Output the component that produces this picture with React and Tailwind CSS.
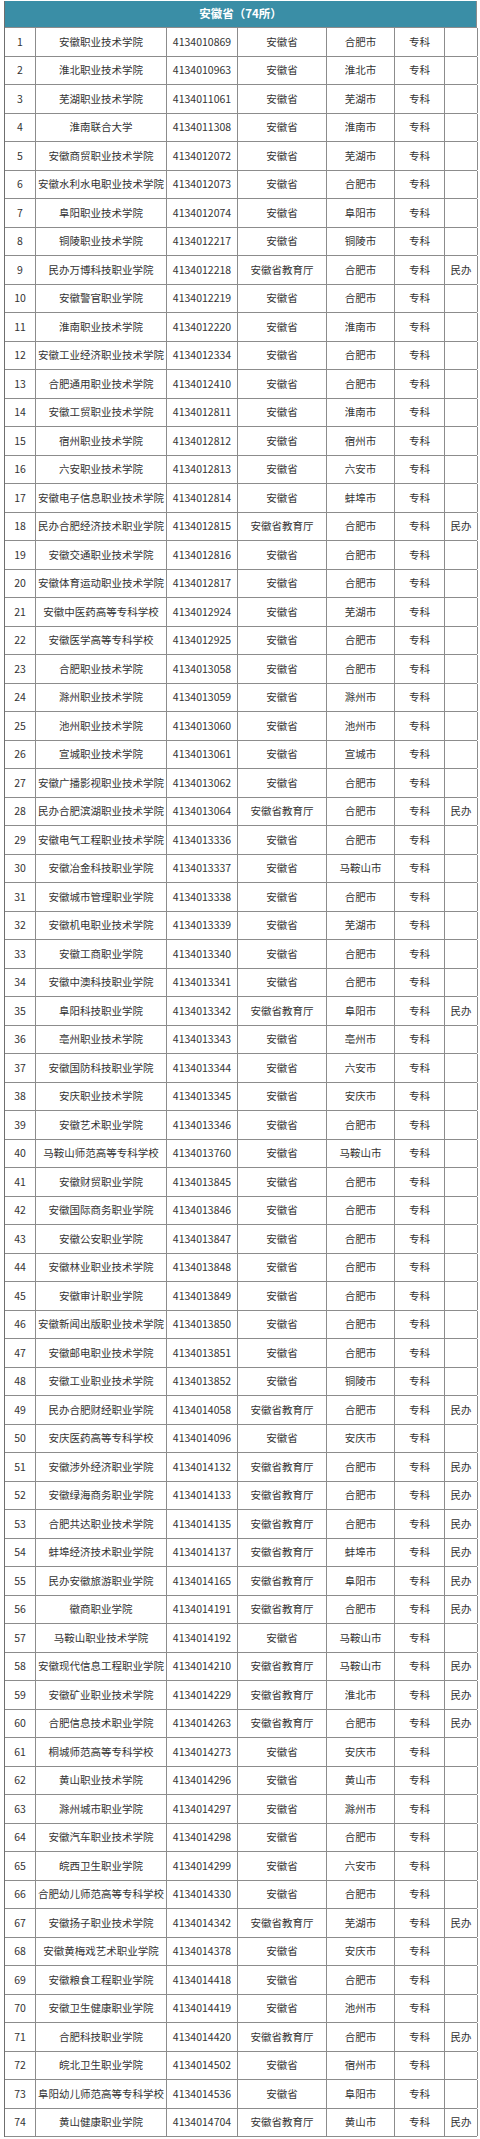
const rows = [
  ['安徽职业技术学院', '4134010869', '安徽省', '合肥市', '专科', ''],
  ['淮北职业技术学院', '4134010963', '安徽省', '淮北市', '专科', ''],
  ['芜湖职业技术学院', '4134011061', '安徽省', '芜湖市', '专科', ''],
  ['淮南联合大学', '4134011308', '安徽省', '淮南市', '专科', ''],
  ['安徽商贸职业技术学院', '4134012072', '安徽省', '芜湖市', '专科', ''],
  ['安徽水利水电职业技术学院', '4134012073', '安徽省', '合肥市', '专科', ''],
  ['阜阳职业技术学院', '4134012074', '安徽省', '阜阳市', '专科', ''],
  ['铜陵职业技术学院', '4134012217', '安徽省', '铜陵市', '专科', ''],
  ['民办万博科技职业学院', '4134012218', '安徽省教育厅', '合肥市', '专科', '民办'],
  ['安徽警官职业学院', '4134012219', '安徽省', '合肥市', '专科', ''],
  ['淮南职业技术学院', '4134012220', '安徽省', '淮南市', '专科', ''],
  ['安徽工业经济职业技术学院', '4134012334', '安徽省', '合肥市', '专科', ''],
  ['合肥通用职业技术学院', '4134012410', '安徽省', '合肥市', '专科', ''],
  ['安徽工贸职业技术学院', '4134012811', '安徽省', '淮南市', '专科', ''],
  ['宿州职业技术学院', '4134012812', '安徽省', '宿州市', '专科', ''],
  ['六安职业技术学院', '4134012813', '安徽省', '六安市', '专科', ''],
  ['安徽电子信息职业技术学院', '4134012814', '安徽省', '蚌埠市', '专科', ''],
  ['民办合肥经济技术职业学院', '4134012815', '安徽省教育厅', '合肥市', '专科', '民办'],
  ['安徽交通职业技术学院', '4134012816', '安徽省', '合肥市', '专科', ''],
  ['安徽体育运动职业技术学院', '4134012817', '安徽省', '合肥市', '专科', ''],
  ['安徽中医药高等专科学校', '4134012924', '安徽省', '芜湖市', '专科', ''],
  ['安徽医学高等专科学校', '4134012925', '安徽省', '合肥市', '专科', ''],
  ['合肥职业技术学院', '4134013058', '安徽省', '合肥市', '专科', ''],
  ['滁州职业技术学院', '4134013059', '安徽省', '滁州市', '专科', ''],
  ['池州职业技术学院', '4134013060', '安徽省', '池州市', '专科', ''],
  ['宣城职业技术学院', '4134013061', '安徽省', '宣城市', '专科', ''],
  ['安徽广播影视职业技术学院', '4134013062', '安徽省', '合肥市', '专科', ''],
  ['民办合肥滨湖职业技术学院', '4134013064', '安徽省教育厅', '合肥市', '专科', '民办'],
  ['安徽电气工程职业技术学院', '4134013336', '安徽省', '合肥市', '专科', ''],
  ['安徽冶金科技职业学院', '4134013337', '安徽省', '马鞍山市', '专科', ''],
  ['安徽城市管理职业学院', '4134013338', '安徽省', '合肥市', '专科', ''],
  ['安徽机电职业技术学院', '4134013339', '安徽省', '芜湖市', '专科', ''],
  ['安徽工商职业学院', '4134013340', '安徽省', '合肥市', '专科', ''],
  ['安徽中澳科技职业学院', '4134013341', '安徽省', '合肥市', '专科', ''],
  ['阜阳科技职业学院', '4134013342', '安徽省教育厅', '阜阳市', '专科', '民办'],
  ['亳州职业技术学院', '4134013343', '安徽省', '亳州市', '专科', ''],
  ['安徽国防科技职业学院', '4134013344', '安徽省', '六安市', '专科', ''],
  ['安庆职业技术学院', '4134013345', '安徽省', '安庆市', '专科', ''],
  ['安徽艺术职业学院', '4134013346', '安徽省', '合肥市', '专科', ''],
  ['马鞍山师范高等专科学校', '4134013760', '安徽省', '马鞍山市', '专科', ''],
  ['安徽财贸职业学院', '4134013845', '安徽省', '合肥市', '专科', ''],
  ['安徽国际商务职业学院', '4134013846', '安徽省', '合肥市', '专科', ''],
  ['安徽公安职业学院', '4134013847', '安徽省', '合肥市', '专科', ''],
  ['安徽林业职业技术学院', '4134013848', '安徽省', '合肥市', '专科', ''],
  ['安徽审计职业学院', '4134013849', '安徽省', '合肥市', '专科', ''],
  ['安徽新闻出版职业技术学院', '4134013850', '安徽省', '合肥市', '专科', ''],
  ['安徽邮电职业技术学院', '4134013851', '安徽省', '合肥市', '专科', ''],
  ['安徽工业职业技术学院', '4134013852', '安徽省', '铜陵市', '专科', ''],
  ['民办合肥财经职业学院', '4134014058', '安徽省教育厅', '合肥市', '专科', '民办'],
  ['安庆医药高等专科学校', '4134014096', '安徽省', '安庆市', '专科', ''],
  ['安徽涉外经济职业学院', '4134014132', '安徽省教育厅', '合肥市', '专科', '民办'],
  ['安徽绿海商务职业学院', '4134014133', '安徽省教育厅', '合肥市', '专科', '民办'],
  ['合肥共达职业技术学院', '4134014135', '安徽省教育厅', '合肥市', '专科', '民办'],
  ['蚌埠经济技术职业学院', '4134014137', '安徽省教育厅', '蚌埠市', '专科', '民办'],
  ['民办安徽旅游职业学院', '4134014165', '安徽省教育厅', '阜阳市', '专科', '民办'],
  ['徽商职业学院', '4134014191', '安徽省教育厅', '合肥市', '专科', '民办'],
  ['马鞍山职业技术学院', '4134014192', '安徽省', '马鞍山市', '专科', ''],
  ['安徽现代信息工程职业学院', '4134014210', '安徽省教育厅', '马鞍山市', '专科', '民办'],
  ['安徽矿业职业技术学院', '4134014229', '安徽省教育厅', '淮北市', '专科', '民办'],
  ['合肥信息技术职业学院', '4134014263', '安徽省教育厅', '合肥市', '专科', '民办'],
  ['桐城师范高等专科学校', '4134014273', '安徽省', '安庆市', '专科', ''],
  ['黄山职业技术学院', '4134014296', '安徽省', '黄山市', '专科', ''],
  ['滁州城市职业学院', '4134014297', '安徽省', '滁州市', '专科', ''],
  ['安徽汽车职业技术学院', '4134014298', '安徽省', '合肥市', '专科', ''],
  ['皖西卫生职业学院', '4134014299', '安徽省', '六安市', '专科', ''],
  ['合肥幼儿师范高等专科学校', '4134014330', '安徽省', '合肥市', '专科', ''],
  ['安徽扬子职业技术学院', '4134014342', '安徽省教育厅', '芜湖市', '专科', '民办'],
  ['安徽黄梅戏艺术职业学院', '4134014378', '安徽省', '安庆市', '专科', ''],
  ['安徽粮食工程职业学院', '4134014418', '安徽省', '合肥市', '专科', ''],
  ['安徽卫生健康职业学院', '4134014419', '安徽省', '池州市', '专科', ''],
  ['合肥科技职业学院', '4134014420', '安徽省教育厅', '合肥市', '专科', '民办'],
  ['皖北卫生职业学院', '4134014502', '安徽省', '宿州市', '专科', ''],
  ['阜阳幼儿师范高等专科学校', '4134014536', '安徽省', '阜阳市', '专科', ''],
  ['黄山健康职业学院', '4134014704', '安徽省教育厅', '黄山市', '专科', '民办'],
];

const cell = 'flex items-center justify-center border-r border-[#8c8c8c] whitespace-nowrap overflow-hidden';

const App = () => {
  return (
    <div className="w-[480px] bg-white pt-[1px] pl-[4px] font-['Noto_Sans_CJK_SC','Noto_Sans',sans-serif] text-[10.5px] text-[#333]">
      <div className="w-[473px] border-l border-[#6f6f6f]">
        <div className="h-[27px] bg-[#3a8ea6] border-b border-[#8c8c8c] border-r flex items-center justify-center text-white font-bold text-[11.5px]">
          安徽省（74所）
        </div>
        {rows.map((r, i) => (
          <div
            key={i}
            className="grid grid-cols-[31px_131px_71px_89px_68px_50px_33px] h-[28.5px] border-b border-[#8c8c8c]"
          >
            <div className={cell}>{i + 1}</div>
            <div className={cell}>{r[0]}</div>
            <div className={cell}>{r[1]}</div>
            <div className={cell}>{r[2]}</div>
            <div className={cell}>{r[3]}</div>
            <div className={cell}>{r[4]}</div>
            <div className={cell}>{r[5]}</div>
          </div>
        ))}
      </div>
    </div>
  );
};

export default App;
